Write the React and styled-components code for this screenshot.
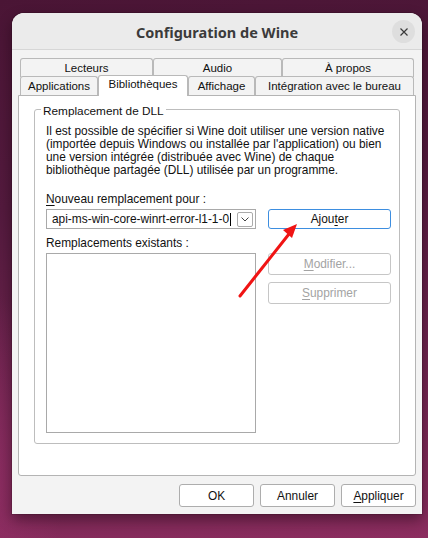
import React from 'react';
import styled, { createGlobalStyle } from 'styled-components';

const GlobalStyle = createGlobalStyle`
  html, body {
    margin: 0;
    padding: 0;
  }
  body {
    width: 428px;
    height: 538px;
    overflow: hidden;
    background:
      radial-gradient(ellipse 120px 260px at -20px 470px, rgba(160, 50, 110, 0.55), transparent 70%),
      linear-gradient(172deg, #4a1535 0%, #541a3e 35%, #702550 70%, #8c2d5f 100%);
    font-family: "Liberation Sans", "DejaVu Sans", sans-serif;
  }
`;

const Desktop = styled.div`
  position: relative;
  width: 428px;
  height: 538px;
  padding: 13px 0 0 12px;
  box-sizing: border-box;
`;

const Window = styled.div`
  width: 410px;
  height: 501px;
  background: #f3f3f3;
  border-radius: 12px 12px 0 0;
  box-shadow: 0 6px 14px rgba(20, 0, 10, 0.45), 0 0 0 1px rgba(0, 0, 0, 0.12);
  display: flex;
  flex-direction: column;
  overflow: hidden;
`;

const TitleBar = styled.div`
  height: 37px;
  flex: none;
  background: #ebebeb;
  border-bottom: 1px solid #d6d6d6;
  box-sizing: border-box;
  display: flex;
  align-items: center;
  justify-content: center;
  position: relative;
`;

const Title = styled.div`
  font-family: "Noto Sans", "Open Sans", sans-serif;
  font-weight: 700;
  font-size: 14.5px;
  color: #3b3b3b;
  margin-top: 1px;
`;

const CloseButton = styled.div`
  position: absolute;
  right: 7px;
  top: 7px;
  width: 23px;
  height: 23px;
  border-radius: 50%;
  background: #dedede;
  display: flex;
  align-items: center;
  justify-content: center;
`;

const Body = styled.div`
  flex: 1;
  padding: 9px 6px 0 6px;
  display: flex;
  flex-direction: column;
  font-size: 11px;
  color: #111;
`;

const TabRow = styled.div`
  display: flex;
  padding: 0 2px;
  height: ${({ h }) => h}px;
  align-items: flex-end;
  position: relative;
  z-index: ${({ front }) => (front ? 2 : 1)};
`;

const Tab = styled.div`
  width: ${({ w }) => w}px;
  height: ${({ active }) => (active ? 21 : 19)}px;
  margin-bottom: ${({ active }) => (active ? -1 : 0)}px;
  box-sizing: border-box;
  border: 1px solid #b9b9b9;
  border-bottom: none;
  border-radius: 3px 3px 0 0;
  background: ${({ active }) => (active ? '#fff' : '#f3f3f3')};
  display: flex;
  justify-content: center;
  padding-top: ${({ active }) => (active ? 2 : 3)}px;
  font-size: 11.5px;
  color: #111;
  white-space: nowrap;
`;

const Panel = styled.div`
  height: 381px;
  box-sizing: border-box;
  background: #fff;
  border: 1px solid #b4b4b4;
  border-radius: 0 0 3px 3px;
  padding: 13px 15px 0 15px;
`;

const Group = styled.div`
  position: relative;
  height: 335px;
  box-sizing: border-box;
  border: 1px solid #bdbdbd;
  border-radius: 3px;
  padding: 15px 8px 0 11px;
`;

const Legend = styled.div`
  position: absolute;
  top: -6px;
  left: 6px;
  background: #fff;
  padding: 0 2px;
  font-size: 11.8px;
  line-height: 14px;
`;

const Description = styled.p`
  margin: 0;
  font-size: 11.9px;
  line-height: 13px;
  white-space: nowrap;
`;

const Form = styled.div`
  margin-top: 16px;
  display: grid;
  grid-template-columns: 210px 123px;
  column-gap: 12px;
`;

const Label = styled.div`
  grid-column: 1 / 3;
  font-size: 11.9px;
  line-height: 13px;
  margin-top: ${({ mt }) => mt || 0}px;
  margin-bottom: 3px;
`;

const Combo = styled.div`
  height: 20px;
  box-sizing: border-box;
  border: 1px solid #a9a9a9;
  display: flex;
  align-items: center;
  padding: 0 2px 0 5px;
  font-size: 11.9px;
`;

const ComboText = styled.span`
  flex: 1;
  white-space: nowrap;
  overflow: hidden;
  display: flex;
  align-items: center;
`;

const Caret = styled.span`
  display: inline-block;
  width: 1px;
  height: 13px;
  background: #000;
  margin-left: 1px;
`;

const DropButton = styled.div`
  width: 16px;
  height: 15px;
  box-sizing: border-box;
  border: 1px solid #ababab;
  border-radius: 2px;
  display: flex;
  align-items: center;
  justify-content: center;
`;

const Button = styled.div`
  height: ${({ h }) => h || 20}px;
  width: ${({ w }) => (w ? `${w}px` : 'auto')};
  box-sizing: border-box;
  border: 1px solid ${({ primary, disabled }) => (primary ? '#3d8ee0' : disabled ? '#c6c6c6' : '#adadad')};
  border-radius: 3px;
  background: #fff;
  display: flex;
  align-items: center;
  justify-content: center;
  font-size: 11.9px;
  color: ${({ disabled }) => (disabled ? '#a3a3a3' : '#111')};
`;

const ButtonStack = styled.div`
  display: flex;
  flex-direction: column;
  gap: 7px;
`;

const ListBox = styled.div`
  height: 180px;
  box-sizing: border-box;
  border: 1px solid #a9a9a9;
  background: #fff;
`;

const Footer = styled.div`
  display: flex;
  justify-content: flex-end;
  gap: 6px;
  padding: 8px 0 0 0;
`;

const Mn = styled.span`
  text-decoration: underline;
  text-underline-offset: 2px;
`;

const Arrow = styled.svg`
  position: absolute;
  left: 0;
  top: 0;
  pointer-events: none;
`;

const rowOne = [
  { label: 'Lecteurs', w: 133 },
  { label: 'Audio', w: 129 },
  { label: 'À propos', w: 132 },
];

const rowTwo = [
  { label: 'Applications', w: 78 },
  { label: 'Bibliothèques', w: 90, active: true },
  { label: 'Affichage', w: 67 },
  { label: 'Intégration avec le bureau', w: 159 },
];

export default function App() {
  return (
    <>
      <GlobalStyle />
      <Desktop>
        <Window>
          <TitleBar>
            <Title>Configuration de Wine</Title>
            <CloseButton>
              <svg width="10" height="10" viewBox="0 0 10 10">
                <path d="M1.5 1.5 L8.5 8.5 M8.5 1.5 L1.5 8.5" stroke="#3a3a3a" strokeWidth="1.2" />
              </svg>
            </CloseButton>
          </TitleBar>
          <Body>
            <TabRow h={18}>
              {rowOne.map((t) => (
                <Tab key={t.label} w={t.w}>{t.label}</Tab>
              ))}
            </TabRow>
            <TabRow h={18} front>
              {rowTwo.map((t) => (
                <Tab key={t.label} w={t.w} active={t.active}>{t.label}</Tab>
              ))}
            </TabRow>
            <Panel>
              <Group>
                <Legend>Remplacement de DLL</Legend>
                <Description>
                  Il est possible de spécifier si Wine doit utiliser une version native<br />
                  (importée depuis Windows ou installée par l'application) ou bien<br />
                  une version intégrée (distribuée avec Wine) de chaque<br />
                  bibliothèque partagée (DLL) utilisée par un programme.
                </Description>
                <Form>
                  <Label><Mn>N</Mn>ouveau remplacement pour :</Label>
                  <Combo>
                    <ComboText>api-ms-win-core-winrt-error-l1-1-0<Caret /></ComboText>
                    <DropButton>
                      <svg width="8" height="5" viewBox="0 0 8 5">
                        <path d="M0.5 0.5 L4 4 L7.5 0.5" fill="none" stroke="#444" strokeWidth="1" />
                      </svg>
                    </DropButton>
                  </Combo>
                  <Button primary>Ajou<Mn>t</Mn>er</Button>
                  <Label mt={8}>Remplacements existants :</Label>
                  <ListBox />
                  <ButtonStack>
                    <Button disabled h={22}><Mn>M</Mn>odifier...</Button>
                    <Button disabled h={22}><Mn>S</Mn>upprimer</Button>
                  </ButtonStack>
                </Form>
              </Group>
            </Panel>
            <Footer>
              <Button w={75} h={23}>OK</Button>
              <Button w={75} h={23}>Annuler</Button>
              <Button w={75} h={23}><Mn>A</Mn>ppliquer</Button>
            </Footer>
          </Body>
        </Window>
        <Arrow width="428" height="538" viewBox="0 0 428 538">
          <line x1="240" y1="296" x2="289" y2="234" stroke="#f01414" strokeWidth="3" strokeLinecap="round" />
          <polygon points="297,224 283,230 292,238" fill="#f01414" />
        </Arrow>
      </Desktop>
    </>
  );
}
